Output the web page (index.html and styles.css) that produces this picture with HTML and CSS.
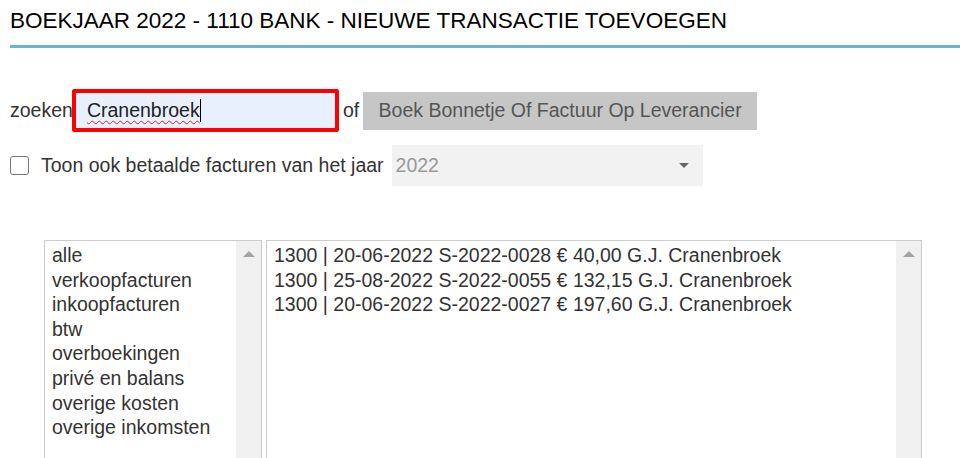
FILE: index.html
```html
<!DOCTYPE html>
<html>
<head>
<meta charset="utf-8">
<link rel="stylesheet" href="styles.css">
</head>
<body>
<div class="page">
  <h1 class="title">BOEKJAAR 2022 - 1110 BANK - NIEUWE TRANSACTIE TOEVOEGEN</h1>
  <div class="row search-row">
    <span class="lbl">zoeken</span>
    <div class="search-box"><span class="typed">Cranenbroek</span><span class="caret"></span></div>
    <span class="lbl of">of</span>
    <div class="btn">Boek Bonnetje Of Factuur Op Leverancier</div>
  </div>
  <div class="row check-row">
    <span class="checkbox"></span>
    <span class="lbl check-lbl">Toon ook betaalde facturen van het jaar</span>
    <div class="select"><span>2022</span><span class="arrow"></span></div>
  </div>
  <div class="lists">
    <div class="listbox cats">
      <div class="items">
        <div>alle</div>
        <div>verkoopfacturen</div>
        <div>inkoopfacturen</div>
        <div>btw</div>
        <div>overboekingen</div>
        <div>privé en balans</div>
        <div>overige kosten</div>
        <div>overige inkomsten</div>
      </div>
      <div class="scrollbar"><span class="up"></span></div>
    </div>
    <div class="listbox results">
      <div class="items">
        <div>1300 | 20-06-2022 S-2022-0028 € 40,00 G.J. Cranenbroek</div>
        <div>1300 | 25-08-2022 S-2022-0055 € 132,15 G.J. Cranenbroek</div>
        <div>1300 | 20-06-2022 S-2022-0027 € 197,60 G.J. Cranenbroek</div>
      </div>
      <div class="scrollbar"><span class="up"></span></div>
    </div>
  </div>
</div>
</body>
</html>
```
FILE: styles.css
```css
html, body {
  margin: 0;
  padding: 0;
  background: #fff;
  overflow: hidden;
  height: 458px;
}
.page {
  padding-left: 10px;
  font-family: "Liberation Sans", Arial, sans-serif;
  color: #333;
}
.title {
  margin: 0;
  padding-top: 8px;
  box-sizing: border-box;
  font-size: 22.5px;
  font-weight: normal;
  color: #000;
  line-height: 26px;
  border-bottom: 3px solid #6ab7cb;
  height: 48px;
}
.row {
  display: flex;
  align-items: center;
}
.search-row {
  margin-top: 41px;
  height: 43px;
}
.lbl {
  font-size: 19.5px;
  color: #333;
}
.search-box {
  margin-left: -1px;
  width: 267px;
  height: 43px;
  box-sizing: border-box;
  border: 4px solid #f00;
  border-radius: 2px;
  background: #e8f0fe;
  display: flex;
  align-items: center;
  padding-left: 11px;
  font-size: 19.5px;
  color: #222;
}
.typed {
  text-decoration: underline wavy #e02020;
  text-decoration-thickness: 1px;
  text-underline-offset: 3px;
}
.caret {
  display: inline-block;
  width: 1px;
  height: 23px;
  background: #000;
}
.of {
  margin-left: 4px;
  margin-right: 4px;
}
.btn {
  height: 38px;
  width: 394px;
  box-sizing: border-box;
  background: #c6c6c6;
  color: #555;
  font-size: 19.5px;
  display: flex;
  align-items: center;
  justify-content: center;
}
.check-row {
  margin-top: 13px;
  height: 41px;
}
.checkbox {
  width: 17px;
  height: 17px;
  border: 1px solid #767676;
  border-radius: 3px;
  background: #fff;
  margin-right: 12px;
}
.check-lbl {
  margin-right: 8px;
}
.select {
  width: 311px;
  height: 41px;
  box-sizing: border-box;
  background: #f2f2f2;
  color: #999;
  font-size: 19.5px;
  display: flex;
  align-items: center;
  justify-content: space-between;
  padding: 0 14px 0 4px;
}
.arrow {
  width: 0;
  height: 0;
  border-left: 5px solid transparent;
  border-right: 5px solid transparent;
  border-top: 5px solid #666;
}
.lists {
  margin-top: 54px;
  margin-left: 34px;
  display: flex;
  gap: 4px;
}
.listbox {
  height: 230px;
  box-sizing: border-box;
  border: 1px solid #ccc;
  display: flex;
  font-size: 19.5px;
  color: #333;
  line-height: 24.6px;
}
.cats { width: 218px; }
.results { width: 656px; }
.items {
  flex: 1;
  padding: 2px 0 0 7px;
}
.scrollbar {
  width: 25px;
  background: #f0f0f0;
  display: flex;
  justify-content: center;
  padding-top: 10px;
  box-sizing: border-box;
}
.up {
  width: 0;
  height: 0;
  border-left: 6px solid transparent;
  border-right: 6px solid transparent;
  border-bottom: 6px solid #a3a3a3;
}
```
